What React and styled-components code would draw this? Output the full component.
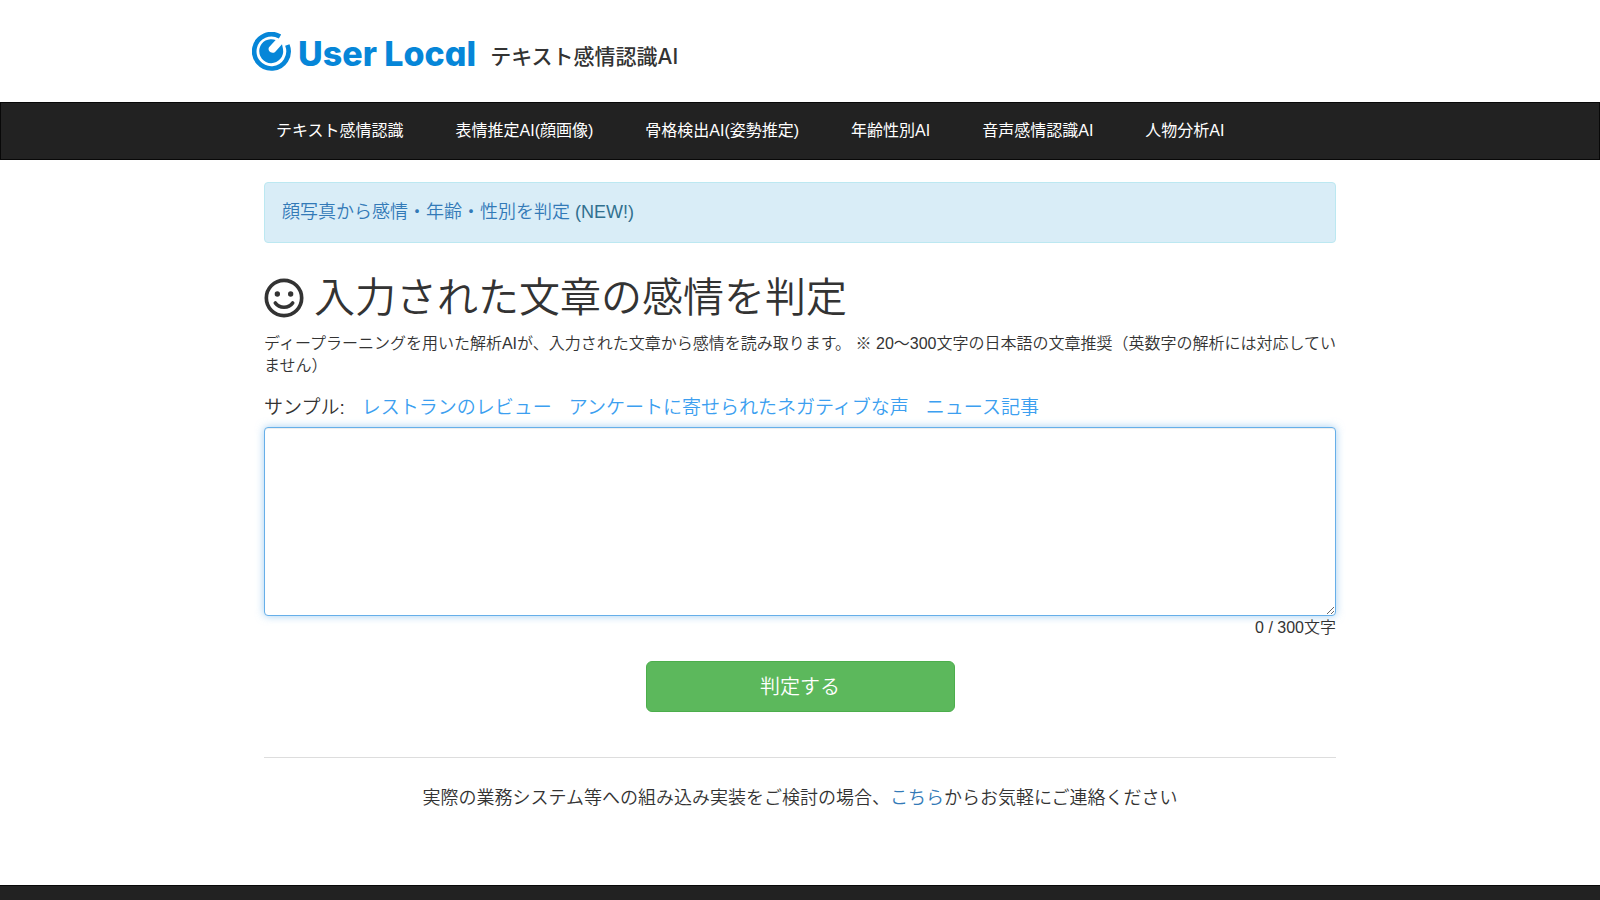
import React, { useState } from "react";
import styled, { createGlobalStyle } from "styled-components";

const navItems = [
  "テキスト感情認識",
  "表情推定AI(顔画像)",
  "骨格検出AI(姿勢推定)",
  "年齢性別AI",
  "音声感情認識AI",
  "人物分析AI",
];

const samples = [
  "レストランのレビュー",
  "アンケートに寄せられたネガティブな声",
  "ニュース記事",
];

const MAX_LENGTH = 300;

function App() {
  const [text, setText] = useState("");

  return (
    <Page>
      <GlobalStyle />
      <Header>
        <Brand href="#">
          <LogoMark viewBox="6 6 120 120" aria-hidden="true">
            <path
              d="M90 19.5A51.5 51.5 0 1 0 112 45"
              fill="none"
              stroke="#0686d8"
              strokeWidth="14"
            />
            <path
              d="M77 30A36 36 0 1 0 99 57L96 43L76 65C67 74 51 64 57 52Z"
              fill="#0686d8"
            />
          </LogoMark>
          <BrandName>User Local</BrandName>
          <Tagline>テキスト感情認識AI</Tagline>
        </Brand>
      </Header>

      <Navbar>
        <NavList>
          {navItems.map((item) => (
            <li key={item}>
              <NavLink href="#">{item}</NavLink>
            </li>
          ))}
        </NavList>
      </Navbar>

      <Main>
        <Notice>
          <Link href="#">顔写真から感情・年齢・性別を判定</Link> (NEW!)
        </Notice>

        <Title>
          <SmileIcon viewBox="0 0 120 120" aria-hidden="true">
            <circle cx="60" cy="60" r="53" />
            <path d="M34 75C46 92 74 92 86 75" />
            <circle cx="40" cy="48" r="8" fill="#333" stroke="none" />
            <circle cx="80" cy="48" r="8" fill="#333" stroke="none" />
          </SmileIcon>
          入力された文章の感情を判定
        </Title>
        <Lead>
          ディープラーニングを用いた解析AIが、入力された文章から感情を読み取ります。
          ※ 20～300文字の日本語の文章推奨（英数字の解析には対応していません）
        </Lead>

        <Samples>
          <label htmlFor="text">サンプル:</label>
          {samples.map((sample) => (
            <SampleLink href="#" key={sample}>
              {sample}
            </SampleLink>
          ))}
        </Samples>

        <form onSubmit={(e) => e.preventDefault()}>
          <TextArea
            id="text"
            maxLength={MAX_LENGTH}
            value={text}
            onChange={(e) => setText(e.target.value)}
          />
          <Counter>
            {text.length} / {MAX_LENGTH}文字
          </Counter>
          <SubmitButton type="submit">判定する</SubmitButton>
        </form>

        <Divider />
        <Contact>
          実際の業務システム等への組み込み実装をご検討の場合、
          <Link href="#">こちら</Link>からお気軽にご連絡ください
        </Contact>
      </Main>

      <Footer />
    </Page>
  );
}

const GlobalStyle = createGlobalStyle`
  * {
    box-sizing: border-box;
  }

  body {
    margin: 0;
    color: #333;
    background: #fff;
    font-family: "Liberation Sans", "Noto Sans CJK JP", sans-serif;
    font-size: 16px;
    font-weight: 350;
    line-height: 22px;
  }

  a {
    text-decoration: none;
  }
`;

const Page = styled.div`
  display: flex;
  flex-direction: column;
  min-height: 100vh;
`;

const Header = styled.header`
  width: 100%;
  max-width: 1096px;
  margin: 0 auto;
  padding: 32px 0 30px;
`;

const Brand = styled.a`
  display: flex;
  align-items: center;
  height: 40px;
  color: #333;
`;

const LogoMark = styled.svg`
  width: 40px;
  height: 40px;
  margin-right: 6px;
`;

const BrandName = styled.span`
  padding-top: 4px;
  color: #0686d8;
  font-family: Inter, sans-serif;
  font-size: 34px;
  font-weight: 800;
  font-feature-settings: "cv11";
  line-height: 40px;
`;

const Tagline = styled.span`
  margin-left: 14px;
  padding-top: 10px;
  font-family: Inter, "Noto Sans CJK JP", sans-serif;
  font-size: 21px;
  font-weight: 500;
  line-height: 32px;
`;

const Navbar = styled.nav`
  background: #222;
  border: 1px solid #080808;
`;

const NavList = styled.ul`
  display: flex;
  width: 100%;
  max-width: 1100px;
  margin: 0 auto;
  padding: 0;
  list-style: none;
`;

const NavLink = styled.a`
  display: block;
  padding: 17px 26px;
  color: #fff;
  font-weight: 400;
`;

const Main = styled.main`
  flex: 1;
  width: 100%;
  max-width: 1072px;
  margin: 0 auto;
  padding-top: 22px;
`;

const Link = styled.a`
  color: #337ab7;
`;

const Notice = styled.div`
  padding: 16px 17px;
  color: #31708f;
  background: #d9edf7;
  border: 1px solid #bce8f1;
  border-radius: 4px;
  font-size: 18px;
  line-height: 27px;
`;

const Title = styled.h1`
  display: flex;
  align-items: center;
  gap: 10px;
  margin: 33px 0 13px;
  font-size: 41px;
  font-weight: 350;
  line-height: 44px;
`;

const SmileIcon = styled.svg`
  width: 40px;
  height: 40px;
  fill: none;
  stroke: #333;
  stroke-width: 11;
  stroke-linecap: round;
`;

const Lead = styled.p`
  margin: 0 -8px 16px 0;
`;

const Samples = styled.div`
  display: flex;
  gap: 17px;
  padding-top: 1px;
  margin-bottom: 5px;
  font-size: 19px;
  line-height: 28px;
`;

const SampleLink = styled.a`
  color: #3c9ff0;
`;

const TextArea = styled.textarea`
  display: block;
  width: 100%;
  height: 189px;
  padding: 7px 14px;
  color: #555;
  font: inherit;
  border: 1px solid #66afe9;
  border-radius: 4px;
  outline: 0;
  box-shadow: inset 0 1px 1px rgba(0, 0, 0, 0.075),
    0 0 8px rgba(102, 175, 233, 0.6);
`;

const Counter = styled.div`
  text-align: right;
  line-height: 24px;
`;

const SubmitButton = styled.button`
  display: block;
  width: 309px;
  margin: 21px auto 45px;
  padding: 12px 18px 10px;
  color: #fff;
  background: #5cb85c;
  border: 1px solid #4cae4c;
  border-radius: 6px;
  font-family: inherit;
  font-size: 20px;
  font-weight: 350;
  line-height: 27px;
  cursor: pointer;
`;

const Divider = styled.hr`
  margin: 0 0 27px;
  border: 0;
  border-top: 1px solid #ddd;
`;

const Contact = styled.p`
  margin: 0;
  font-size: 18px;
  line-height: 26px;
  text-align: center;
`;

const Footer = styled.footer`
  min-height: 15px;
  background: #222;
  border-top: 1px solid #080808;
`;

export default App;
